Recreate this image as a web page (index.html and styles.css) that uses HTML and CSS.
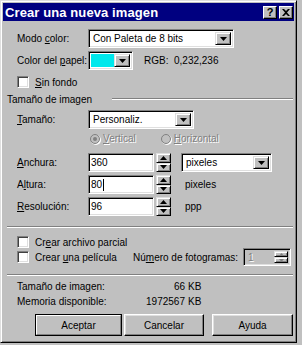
FILE: index.html
```html
<!DOCTYPE html>
<html lang="es">
<head>
    <meta charset="UTF-8">
    <meta name="viewport" content="width=device-width, initial-scale=1.0">
    <title>Crear una nueva imagen</title>
    <link rel="stylesheet" href="styles.css">
</head>
<body>
    <div class="dialog">
        <div class="titlebar">
            <span class="title">Crear una nueva imagen</span>
            <div class="caption">
                <span class="cap-btn help">?</span>
                <span class="cap-btn">
                    <svg width="8" height="7" viewBox="0 0 8 7"><path d="M0 0h2l2 2 2-2h2L5 3.5 8 7H6L4 5 2 7H0l3-3.5z"/></svg>
                </span>
            </div>
        </div>

        <div class="content">
            <div class="row r-modo">
                <span class="label">Modo <u>c</u>olor:</span>
                <div class="combo w-modo">
                    <span class="combo-text">Con Paleta de 8 bits</span>
                    <span class="arrow-btn"><svg width="7" height="4"><path d="M0 0h7L3.5 4z"/></svg></span>
                </div>
            </div>

            <div class="row r-papel">
                <span class="label">Color del <u>p</u>apel:</span>
                <div class="colorpick">
                    <span class="swatch"></span>
                    <span class="arrow-btn"><svg width="7" height="4"><path d="M0 0h7L3.5 4z"/></svg></span>
                </div>
                <span class="rgb">RGB:&nbsp; 0,232,236</span>
            </div>

            <div class="row r-check r-sinfondo">
                <span class="checkbox"></span>
                <span><u>S</u>in fondo</span>
            </div>

            <div class="group-head">
                <span>Tamaño de imagen</span>
                <span class="etch"></span>
            </div>

            <div class="row r-tamano">
                <span class="label"><u>T</u>amaño:</span>
                <div class="combo w-tamano">
                    <span class="combo-text">Personaliz.</span>
                    <span class="arrow-btn"><svg width="7" height="4"><path d="M0 0h7L3.5 4z"/></svg></span>
                </div>
            </div>

            <div class="row r-radios">
                <span class="radio checked"></span>
                <span class="disabled"><u>V</u>ertical</span>
                <span class="radio radio-h"></span>
                <span class="disabled"><u>H</u>orizontal</span>
            </div>

            <div class="row r-num r-anchura">
                <span class="label"><u>A</u>nchura:</span>
                <div class="field">360</div>
                <div class="spin">
                    <span class="spin-btn"><svg width="7" height="4"><path d="M3.5 0L7 4H0z"/></svg></span>
                    <span class="spin-btn"><svg width="7" height="4"><path d="M0 0h7L3.5 4z"/></svg></span>
                </div>
                <div class="combo w-unit">
                    <span class="combo-text">pixeles</span>
                    <span class="arrow-btn"><svg width="7" height="4"><path d="M0 0h7L3.5 4z"/></svg></span>
                </div>
            </div>

            <div class="row r-num">
                <span class="label">A<u>l</u>tura:</span>
                <div class="field">80<span class="caret"></span></div>
                <div class="spin">
                    <span class="spin-btn"><svg width="7" height="4"><path d="M3.5 0L7 4H0z"/></svg></span>
                    <span class="spin-btn"><svg width="7" height="4"><path d="M0 0h7L3.5 4z"/></svg></span>
                </div>
                <span class="unit">pixeles</span>
            </div>

            <div class="row r-num">
                <span class="label"><u>R</u>esolución:</span>
                <div class="field">96</div>
                <div class="spin">
                    <span class="spin-btn"><svg width="7" height="4"><path d="M3.5 0L7 4H0z"/></svg></span>
                    <span class="spin-btn"><svg width="7" height="4"><path d="M0 0h7L3.5 4z"/></svg></span>
                </div>
                <span class="unit">ppp</span>
            </div>

            <div class="sep sep-1"></div>

            <div class="row r-check r-parcial">
                <span class="checkbox"></span>
                <span>Cr<u>e</u>ar archivo parcial</span>
            </div>

            <div class="row r-check r-pelicula">
                <span class="checkbox"></span>
                <span class="peli">Crear <u>u</u>na película</span>
                <span class="frames-label">Nú<u>m</u>ero de fotogramas:</span>
                <div class="frames">
                    <span class="frames-text">1</span>
                    <div class="spin spin-off">
                        <span class="spin-btn"><svg width="5" height="3"><path d="M2.5 0L5 3H0z"/></svg></span>
                        <span class="spin-btn"><svg width="5" height="3"><path d="M0 0h5L2.5 3z"/></svg></span>
                    </div>
                </div>
            </div>

            <div class="sep sep-2"></div>

            <div class="info">
                <span>Tamaño de imagen:</span><span class="num">66</span><span>KB</span>
                <span>Memoria disponible:</span><span class="num">1972567</span><span>KB</span>
            </div>

            <div class="buttons">
                <span class="btn btn-default"><span class="btn-in">Aceptar</span></span>
                <span class="btn btn-cancel"><span class="btn-in">Cancelar</span></span>
                <span class="btn btn-help"><span class="btn-in">Ayuda</span></span>
            </div>
        </div>
    </div>
</body>
</html>
```

FILE: styles.css
```css
body {
    margin: 0;
    background-color: #c0c0c0;
    font-family: "Liberation Sans", Arial, sans-serif;
    font-size: 10px;
    color: #000;
    white-space: nowrap;
}
u {
    text-decoration-thickness: 1px;
    text-underline-offset: 1px;
}
.dialog {
    width: 297px;
    height: 343px;
    box-sizing: border-box;
    padding: 2px;
    border: 1px solid;
    border-color: #dfdfdf #000 #000 #dfdfdf;
    box-shadow: inset 1px 1px #fff, inset -1px -1px #808080;
    background-color: #c0c0c0;
}
.titlebar {
    height: 18px;
    background-color: #000080;
    display: flex;
    align-items: center;
    justify-content: space-between;
    padding: 0 1px 0 2px;
}
.title {
    color: #fff;
    font-weight: bold;
    font-size: 13px;
    letter-spacing: 0.1px;
}
.caption {
    display: flex;
    gap: 2px;
}
.cap-btn {
    width: 14px;
    height: 13px;
    box-sizing: border-box;
    display: flex;
    justify-content: center;
    align-items: center;
    background-color: #c0c0c0;
    border: 1px solid;
    border-color: #fff #000 #000 #fff;
    box-shadow: inset -1px -1px #808080;
}
.help {
    font-weight: bold;
    font-size: 11px;
    line-height: 1;
}

.content {
    padding: 0 1px 0 4px;
}
.row {
    display: flex;
    align-items: center;
    padding-left: 10px;
}
.row > * {
    flex-shrink: 0;
}
.label {
    width: 71px;
}
.r-modo { margin-top: 8px; height: 19px; }
.r-papel { margin-top: 3px; height: 19px; }
.r-sinfondo { margin-top: 6px; height: 12px; }
.r-tamano { margin-top: 5px; height: 19px; }
.r-radios { margin-top: 3px; height: 13px; padding-left: 83px; }
.r-num { margin-top: 3px; height: 19px; }
.r-anchura { margin-top: 8px; }
.r-parcial { margin-top: 8px; height: 12px; }
.r-pelicula { height: 18px; }

/* sunken + raised 3d edges */
.combo, .colorpick, .field, .frames {
    box-sizing: border-box;
    height: 100%;
    border: 1px solid;
    border-color: #808080 #fff #fff #808080;
    box-shadow: inset 1px 1px #000, inset -1px -1px #dfdfdf;
    background-color: #fff;
    display: flex;
    align-items: center;
    padding: 2px;
}
.combo-text {
    flex: 1;
    padding-left: 2px;
}
.arrow-btn, .spin-btn {
    box-sizing: border-box;
    display: flex;
    justify-content: center;
    align-items: center;
    background-color: #c0c0c0;
    border: 1px solid;
    border-color: #dfdfdf #000 #000 #dfdfdf;
    box-shadow: inset 1px 1px #fff, inset -1px -1px #808080;
}
.arrow-btn {
    width: 16px;
    height: 100%;
}
.w-modo { width: 146px; }
.w-tamano { width: 106px; }
.w-unit { width: 91px; margin-left: 10px; }

.colorpick {
    width: 45px;
}
.swatch {
    flex: 1;
    height: 100%;
    background-color: rgb(0, 232, 236);
}
.rgb {
    margin-left: 11px;
}

.r-check .checkbox {
    margin-right: 6px;
}
.checkbox {
    width: 12px;
    height: 12px;
    box-sizing: border-box;
    background-color: #fff;
    border: 1px solid;
    border-color: #808080 #fff #fff #808080;
    box-shadow: inset 1px 1px #404040, inset -1px -1px #dfdfdf;
}

.group-head {
    margin-top: 5px;
    height: 12px;
    display: flex;
    align-items: center;
}
.etch {
    flex: 1;
    margin-left: 20px;
    height: 0;
    border-top: 1px solid #808080;
    border-bottom: 1px solid #fff;
}
.sep {
    height: 0;
    border-top: 1px solid #808080;
    border-bottom: 1px solid #fff;
}
.sep-1 { margin-top: 10px; }
.sep-2 { margin-top: 8px; }

.radio {
    width: 10px;
    height: 10px;
    box-sizing: border-box;
    border-radius: 50%;
    border: 1px solid #808080;
    box-shadow: 1px 1px #fff;
    background-color: #c0c0c0;
    margin-right: 3px;
    display: flex;
    justify-content: center;
    align-items: center;
}
.radio.checked::after {
    content: "";
    width: 4px;
    height: 4px;
    border-radius: 50%;
    background-color: #808080;
}
.radio-h {
    margin-left: 25px;
}
.disabled, .frames-text {
    color: #808080;
    text-shadow: 1px 1px #fff;
}

.field {
    width: 66px;
    padding: 2px 2px 2px 2px;
}
.caret {
    display: inline-block;
    width: 1px;
    height: 12px;
    background-color: #000;
    vertical-align: middle;
    margin-left: 1px;
}
.spin {
    width: 15px;
    height: 19px;
    margin-left: 2px;
    display: flex;
    flex-direction: column;
}
.spin-btn {
    flex: 1;
}
.unit {
    margin-left: 14px;
}

.peli {
    width: 98px;
}
.frames-label {
    width: 110px;
}
.frames {
    width: 48px;
    background-color: #c0c0c0;
    padding: 2px 2px 2px 4px;
    justify-content: space-between;
}
.spin-off {
    height: 100%;
    width: 14px;
}
.spin-off svg {
    fill: #808080;
}

.info {
    margin-top: 3px;
    padding-left: 10px;
    display: grid;
    grid-template-columns: 120px 48px auto;
    grid-auto-rows: 15px;
    align-items: center;
}
.info .num {
    text-align: right;
}
.info .num + span {
    padding-left: 3px;
}

.buttons {
    margin-top: 5px;
    padding-left: 28px;
    display: flex;
    height: 22px;
}
.btn {
    box-sizing: border-box;
    height: 100%;
    display: flex;
    border: 1px solid;
    border-color: #fff #000 #000 #fff;
    box-shadow: inset -1px -1px #808080, inset 1px 1px #dfdfdf;
}
.btn-in {
    flex: 1;
    display: flex;
    justify-content: center;
    align-items: center;
}
.btn-default {
    width: 87px;
    border: 1px solid #000;
    box-shadow: none;
}
.btn-default .btn-in {
    border: 1px solid;
    border-color: #fff #808080 #808080 #fff;
}
.btn-cancel { width: 80px; margin-left: 2px; }
.btn-help { width: 81px; margin-left: 8px; }
```
